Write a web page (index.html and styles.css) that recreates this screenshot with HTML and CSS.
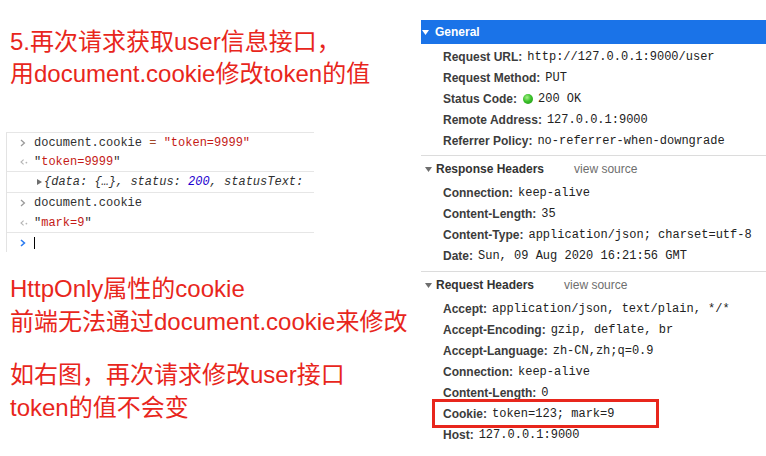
FILE: index.html
```html
<!DOCTYPE html>
<html lang="zh-CN">
<head>
<meta charset="utf-8">
<title>HttpOnly cookie</title>
<link rel="stylesheet" href="styles.css">
</head>
<body>
<div class="page">
  <div class="left">
    <div class="title">5.再次请求获取user信息接口，<br>用document.cookie修改token的值</div>

    <div class="console">
      <div class="msg r19">
        <span class="ico"><svg width="6" height="8" viewBox="0 0 6 8"><path d="M1 1l3.4 3-3.4 3" fill="none" stroke="#9a9a9a" stroke-width="1.3"/></svg></span>
        <span>document.cookie <span class="op">=</span> <span class="str">"token=9999"</span></span>
      </div>
      <div class="msg r19 sep">
        <span class="ico"><svg width="8" height="8" viewBox="0 0 8 8"><path d="M3.6 1.6L1 4l2.6 2.4" fill="none" stroke="#b5b5b5" stroke-width="1.1"/><circle cx="6.4" cy="4.6" r="0.9" fill="#b5b5b5"/></svg></span>
        <span><span class="q">"</span><span class="str">token=9999</span><span class="q">"</span></span>
      </div>
      <div class="msg r20 sep obj">
        <span class="tri"><svg width="5" height="6" viewBox="0 0 5 6"><path d="M0 0l5 3-5 3z" fill="#6e6e6e"/></svg></span>
        <span class="it">{data: {…}, status: <span class="num">200</span>, statusText:</span>
      </div>
      <div class="msg r20">
        <span class="ico"><svg width="6" height="8" viewBox="0 0 6 8"><path d="M1 1l3.4 3-3.4 3" fill="none" stroke="#9a9a9a" stroke-width="1.3"/></svg></span>
        <span>document.cookie</span>
      </div>
      <div class="msg r19 sep">
        <span class="ico"><svg width="8" height="8" viewBox="0 0 8 8"><path d="M3.6 1.6L1 4l2.6 2.4" fill="none" stroke="#b5b5b5" stroke-width="1.1"/><circle cx="6.4" cy="4.6" r="0.9" fill="#b5b5b5"/></svg></span>
        <span><span class="q">"</span><span class="str">mark=9</span><span class="q">"</span></span>
      </div>
      <div class="msg r19">
        <span class="ico"><svg width="6" height="8" viewBox="0 0 6 8"><path d="M1 1l3.4 3-3.4 3" fill="none" stroke="#2b7bf0" stroke-width="1.6"/></svg></span>
        <span class="caret"></span>
      </div>
    </div>

    <div class="note">HttpOnly属性的cookie<br>前端无法通过document.cookie来修改</div>
    <div class="note">如右图，再次请求修改user接口<br>token的值不会变</div>
  </div>

  <div class="right">
    <div class="sec-head general">
      <svg class="down" width="7" height="5" viewBox="0 0 7 5"><path d="M0 0h7L3.5 5z" fill="#fff"/></svg>
      <span>General</span>
    </div>
    <div class="rows">
      <div class="row"><span class="k">Request URL:</span><span class="v">http://127.0.0.1:9000/user</span></div>
      <div class="row"><span class="k">Request Method:</span><span class="v">PUT</span></div>
      <div class="row"><span class="k">Status Code:</span><span class="dot"></span><span class="v v-dot">200 OK</span></div>
      <div class="row"><span class="k">Remote Address:</span><span class="v">127.0.0.1:9000</span></div>
      <div class="row"><span class="k">Referrer Policy:</span><span class="v">no-referrer-when-downgrade</span></div>
    </div>

    <div class="sec-head">
      <svg class="down" width="7" height="5" viewBox="0 0 7 5"><path d="M0 0h7L3.5 5z" fill="#6e6e6e"/></svg>
      <span>Response Headers</span>
      <span class="src">view source</span>
    </div>
    <div class="rows resp">
      <div class="row"><span class="k">Connection:</span><span class="v">keep-alive</span></div>
      <div class="row"><span class="k">Content-Length:</span><span class="v">35</span></div>
      <div class="row"><span class="k">Content-Type:</span><span class="v">application/json; charset=utf-8</span></div>
      <div class="row"><span class="k">Date:</span><span class="v">Sun, 09 Aug 2020 16:21:56 GMT</span></div>
    </div>

    <div class="sec-head">
      <svg class="down" width="7" height="5" viewBox="0 0 7 5"><path d="M0 0h7L3.5 5z" fill="#6e6e6e"/></svg>
      <span>Request Headers</span>
      <span class="src">view source</span>
    </div>
    <div class="rows req">
      <div class="row"><span class="k">Accept:</span><span class="v">application/json, text/plain, */*</span></div>
      <div class="row"><span class="k">Accept-Encoding:</span><span class="v">gzip, deflate, br</span></div>
      <div class="row"><span class="k">Accept-Language:</span><span class="v">zh-CN,zh;q=0.9</span></div>
      <div class="row"><span class="k">Connection:</span><span class="v">keep-alive</span></div>
      <div class="row"><span class="k">Content-Length:</span><span class="v">0</span></div>
      <div class="row hl"><span class="k">Cookie:</span><span class="v">token=123; mark=9</span><span class="box"></span></div>
      <div class="row"><span class="k">Host:</span><span class="v">127.0.0.1:9000</span></div>
    </div>
  </div>
</div>
</body>
</html>
```

FILE: styles.css
```css
html, body {
  margin: 0;
  padding: 0;
  background: #fff;
}

.page {
  display: flex;
  width: 766px;
  height: 456px;
  overflow: hidden;
}

.left {
  width: 421px;
  flex: none;
}

.title,
.note {
  font-family: "Liberation Sans", "Noto Sans CJK SC", sans-serif;
  font-size: 24px;
  color: #e8261c;
  padding-left: 10px;
  white-space: nowrap;
}

.title {
  margin-top: 26px;
  line-height: 32px;
}

.note {
  margin-top: 20px;
  line-height: 33px;
}

/* console */
.console {
  margin-top: 42px;
  margin-left: 6px;
  width: 307px;
  border-left: 1px solid #e3e3e3;
  border-top: 1px solid #e6e6e6;
  font-family: "Liberation Mono", monospace;
  font-size: 12px;
  color: #303030;
}

.msg {
  display: flex;
  align-items: center;
  padding-left: 13px;
  white-space: nowrap;
  overflow: hidden;
}

.r19 { height: 19px; }
.r20 { height: 20px; }

.msg.sep {
  border-bottom: 1px solid #e6e6e6;
}

.ico {
  width: 14px;
  flex: none;
  display: flex;
  align-items: center;
}

.msg.obj {
  padding-left: 30px;
}

.tri {
  width: 7px;
  flex: none;
  display: flex;
  align-items: center;
}

.it {
  font-style: italic;
  color: #303030;
}

.op { color: #a04a2a; }
.str { color: #c41a16; }
.q { color: #303030; }
.num { color: #1c00cf; }

.caret {
  width: 1px;
  height: 12px;
  background: #000;
}

/* right panel */
.right {
  flex: 1;
  padding-top: 20px;
  font-family: "Liberation Sans", Arial, sans-serif;
  font-size: 12px;
}

.sec-head {
  display: flex;
  align-items: center;
  height: 26px;
  padding-left: 4px;
  font-weight: bold;
  color: #333;
  white-space: nowrap;
}

.sec-head .down {
  margin-right: 4px;
  flex: none;
}

.sec-head.general {
  height: 24px;
  padding-left: 1px;
  background: #1a73e8;
  color: #fff;
}

.sec-head.general .down {
  margin-right: 6px;
}

.src {
  margin-left: 30px;
  font-weight: normal;
  color: #6e6e6e;
}

.rows {
  padding-top: 2px;
  padding-bottom: 4px;
  border-bottom: 1px solid #dcdcdc;
}

.rows.resp {
  padding-top: 0;
  padding-bottom: 5px;
}

.rows.req {
  padding-top: 0;
  padding-bottom: 0;
  border-bottom: none;
}

.row {
  position: relative;
  display: flex;
  align-items: center;
  height: 21px;
  padding-left: 22px;
  white-space: nowrap;
}

.k {
  font-weight: bold;
  color: #3c3c3c;
}

.v {
  margin-left: 5px;
  font-family: "Liberation Mono", monospace;
  font-size: 12px;
  color: #222;
}

.v.v-dot {
  margin-left: 5px;
}

.dot {
  width: 10px;
  height: 10px;
  margin-left: 6px;
  border-radius: 50%;
  background: radial-gradient(circle at 40% 35%, #a6f08a 0%, #3cc22b 45%, #1f8f14 100%);
}

.box {
  position: absolute;
  left: 11px;
  top: -4px;
  width: 227px;
  height: 29px;
  box-sizing: border-box;
  border: 3px solid #e8261c;
}
```
